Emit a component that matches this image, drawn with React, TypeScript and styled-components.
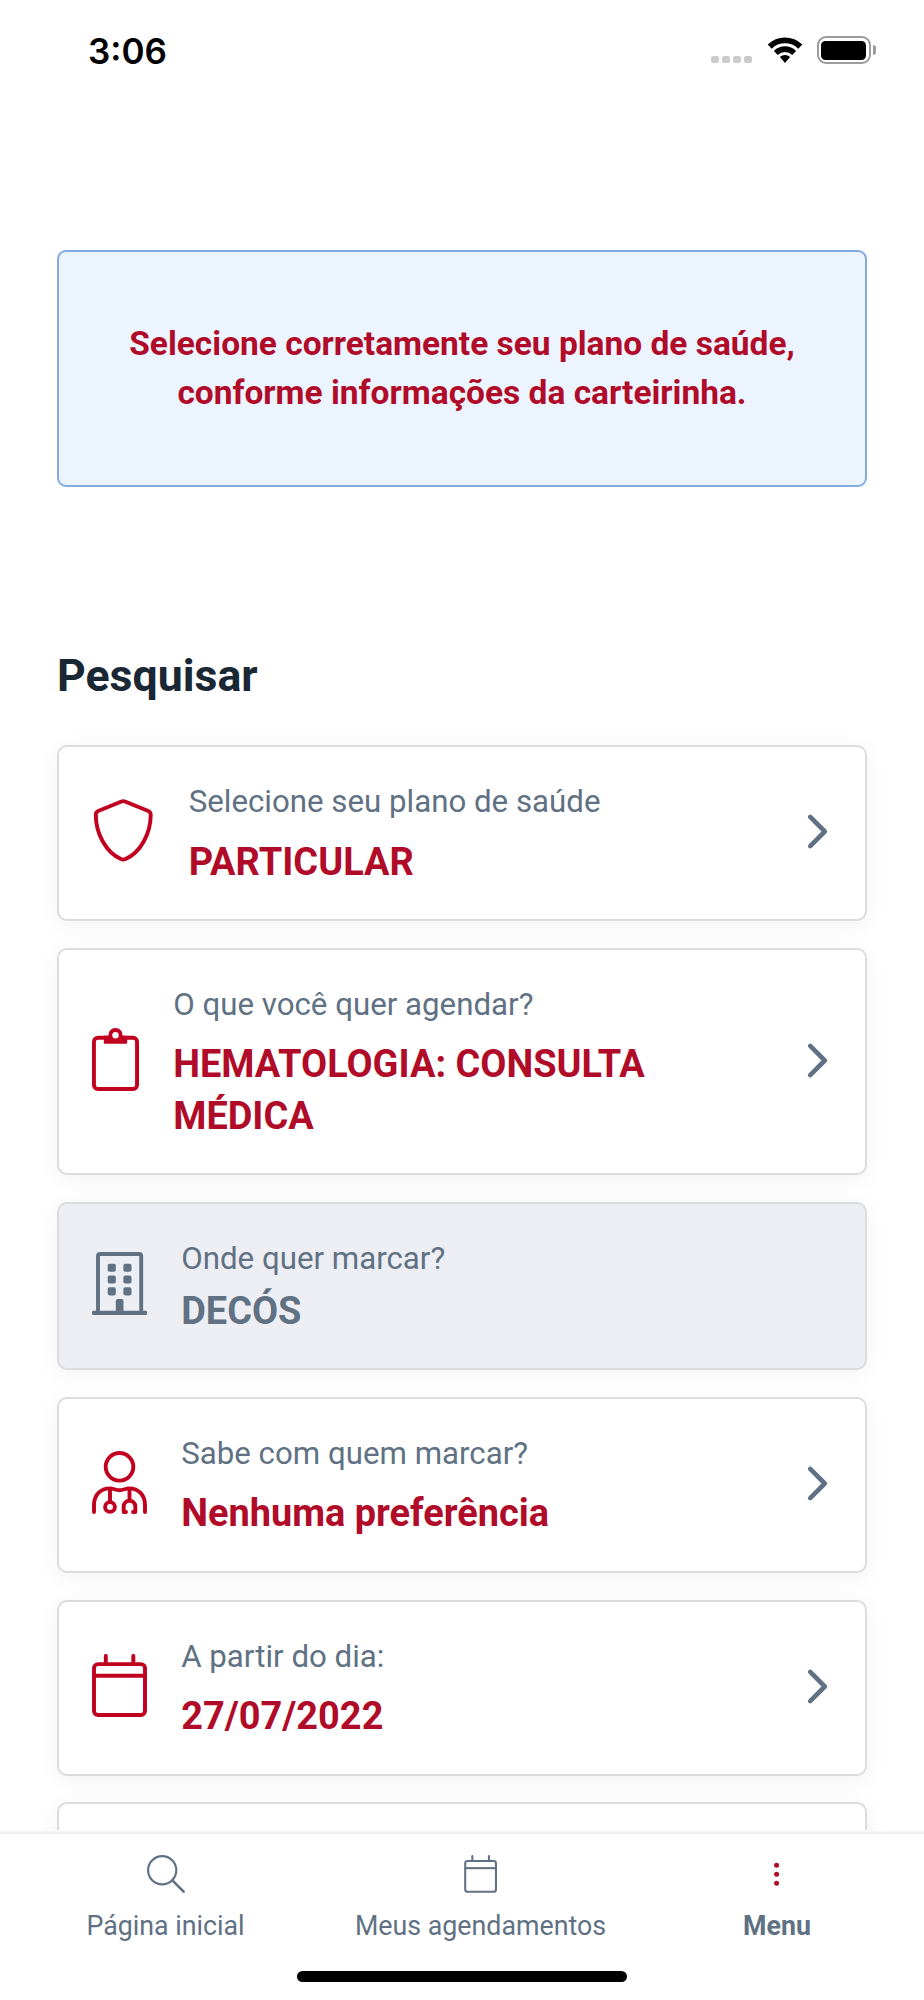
import React from 'react';
import styled, { createGlobalStyle } from 'styled-components';

const red = '#b00b28';
const iconRed = '#c1001f';
const slate = '#607183';

const GlobalStyle = createGlobalStyle`
  * { box-sizing: border-box; }
  body { margin: 0; background: #fff; }
  svg { display: block; flex: none; }
`;

const Screen = styled.div`
  display: flex;
  flex-direction: column;
  width: 924px;
  height: 2000px;
  overflow: hidden;
  background: #fff;
  font-family: Roboto, 'Liberation Sans', sans-serif;
`;

const StatusBar = styled.header`
  display: flex;
  justify-content: space-between;
  align-items: flex-start;
  height: 100px;
  flex: none;
  padding: 30px 48px 0 88px;
`;

const Time = styled.span`
  font-family: Inter, sans-serif;
  font-weight: 600;
  font-size: 35px;
  line-height: 42px;
  color: #000;
`;

const StatusIcons = styled.div`
  display: flex;
  align-items: flex-end;
  height: 28px;
  margin-top: 6px;
`;

const SignalDots = styled.div`
  display: flex;
  gap: 3.3px;
  margin: 0 15px 0.7px 0;
`;

const SignalDot = styled.i`
  width: 7.7px;
  height: 7.5px;
  border-radius: 2.2px;
  background: #cbcbcb;
`;

const Battery = styled.div`
  width: 54px;
  height: 28px;
  margin-left: 14px;
  padding: 2.5px;
  border: 2px solid #9b9b9b;
  border-radius: 9px;
`;

const Charge = styled.div`
  height: 100%;
  border-radius: 4.5px;
  background: #000;
`;

const Nub = styled.div`
  width: 3.3px;
  height: 9.6px;
  margin: 0 0 9px 2px;
  border-radius: 0 4px 4px 0;
  background: #9b9b9b;
`;

const Content = styled.main`
  display: flex;
  flex-direction: column;
  height: 1730px;
  flex: none;
  overflow: hidden;
  padding: 150px 57px 0;
`;

const Notice = styled.section`
  display: flex;
  align-items: center;
  justify-content: center;
  height: 237px;
  flex: none;
  padding-bottom: 2px;
  border: 2px solid #82abe1;
  border-radius: 9px;
  background: #ecf4ff;
  color: ${red};
  font-weight: 700;
  font-size: 33.48px;
  line-height: 49px;
  text-align: center;
`;

const Heading = styled.h1`
  margin: 163px 0 43px;
  color: #1a2735;
  font-weight: 700;
  font-size: 44.64px;
  line-height: 52px;
`;

const CardList = styled.div`
  display: flex;
  flex-direction: column;
  gap: 26.8px;
`;

const Card = styled.button<{ $disabled?: boolean }>`
  display: flex;
  align-items: center;
  gap: 34.2px;
  flex: none;
  width: 100%;
  margin: 0;
  padding: 32px 33px;
  border: 2px solid #dcdcdc;
  border-radius: 10px;
  background: ${p => (p.$disabled ? '#edeef3' : '#fff')};
  box-shadow: 0 4px 22px rgba(0, 0, 0, 0.055);
  font-family: inherit;
  text-align: left;
`;

const IconSlot = styled.span`
  flex: none;
  margin-bottom: 4.5px;
`;

const CardText = styled.span<{ $tight?: boolean }>`
  display: flex;
  flex-direction: column;
  flex: 1;
  gap: ${p => (p.$tight ? 4 : 12)}px;
  padding-top: 1px;
  margin-bottom: -1px;
`;

const Label = styled.span`
  color: ${slate};
  font-size: 31.25px;
  line-height: 44.5px;
`;

const Value = styled.span<{ $muted?: boolean }>`
  max-width: 520px;
  color: ${p => (p.$muted ? slate : red)};
  font-weight: 700;
  font-size: 37.94px;
  line-height: 51.5px;
`;

const ChevronSlot = styled.span`
  flex: none;
  margin-bottom: 3px;
`;

const NavShadow = styled.div`
  height: 4px;
  flex: none;
  background: linear-gradient(to bottom, #fdfdfd, #ebebeb);
`;

const NavBar = styled.nav`
  display: flex;
  flex-direction: column;
  align-items: center;
  justify-content: space-between;
  flex: 1;
  padding: 21px 0 18px;
  background: #fff;
`;

const Tabs = styled.div`
  display: grid;
  grid-template-columns: 331fr 299fr 294fr;
  width: 100%;
`;

const Tab = styled.a<{ $active?: boolean }>`
  display: flex;
  flex-direction: column;
  align-items: center;
  gap: 16.5px;
  color: ${slate};
  font-weight: ${p => (p.$active ? 700 : 400)};
  font-size: 26.78px;
  line-height: 32px;
`;

const HomeIndicator = styled.div`
  width: 330px;
  height: 11px;
  border-radius: 6px;
  background: #000;
`;

const WifiIcon = () => (
  <svg width="36" height="28" viewBox="0 0 36 28">
    <path d="M0.7 8.6 A24.6 24.6 0 0 1 35.3 8.6 L31.3 12.7 A18.8 18.8 0 0 0 4.7 12.7 Z" />
    <path d="M6.9 14.9 A15.8 15.8 0 0 1 29.1 14.9 L25.2 18.9 A10.2 10.2 0 0 0 10.8 18.9 Z" />
    <path d="M12.9 21.1 A7.4 7.4 0 0 1 23.1 21.1 L18 27 Z" strokeLinejoin="round" />
  </svg>
);

const ShieldIcon = () => (
  <svg width="62.5" height="63" viewBox="0 0 62.5 63" fill="none" stroke={iconRed} strokeWidth="3.9" strokeLinejoin="round">
    <path d="M29.5 2.5 Q31.25 1.7 33 2.5 L56.3 12 Q58.7 13.1 58.7 16 C58.7 34.5 48.5 53.5 33.6 60 Q31.25 61 28.9 60 C14 53.5 3.8 34.5 3.8 16 Q3.8 13.1 6.2 12 Z" />
  </svg>
);

const ClipboardIcon = () => (
  <svg width="47" height="63" viewBox="0 0 47 63" fill="none" stroke={iconRed} strokeWidth="3.9">
    <rect x="1.95" y="9.8" width="43.1" height="51.2" rx="4" />
    <path
      d="M23.5 0 A7 7 0 0 1 30.5 7.8 H35.2 V14.6 Q35.2 15.8 34 15.8 H13 Q11.8 15.8 11.8 14.6 V7.8 H16.5 A7 7 0 0 1 23.5 0 Z"
      fill={iconRed}
      stroke="none"
    />
    <circle cx="23.5" cy="7.2" r="3.2" fill="#fff" stroke="none" />
  </svg>
);

const BuildingIcon = () => (
  <svg width="55" height="63" viewBox="0 0 55 63" fill={slate}>
    <path d="M6 60 V4.2 Q6 2 8.2 2 H47 Q49.2 2 49.2 4.2 V60" fill="none" stroke={slate} strokeWidth="3.9" />
    <rect x="0" y="58.8" width="55" height="4.2" rx="1.2" />
    {[11.7, 23.5, 35.3].map(y => (
      <React.Fragment key={y}>
        <rect x="15.7" y={y} width="8.1" height="8.1" rx="1.8" />
        <rect x="31.4" y={y} width="8.1" height="8.1" rx="1.8" />
      </React.Fragment>
    ))}
    <path d="M23.8 60 V49 Q23.8 47 25.8 47 H29.5 Q31.5 47 31.5 49 V60 Z" />
  </svg>
);

const DoctorIcon = () => (
  <svg width="55" height="63" viewBox="0 0 55 63" fill="none" stroke={iconRed} strokeWidth="3.9" strokeLinecap="round" strokeLinejoin="round">
    <circle cx="27.5" cy="15.8" r="13.8" />
    <path d="M2 61 V54 C2 44 8.5 37.4 18 37.4 C21.5 37.4 23.5 39.2 27.5 39.2 C31.5 39.2 33.5 37.4 37 37.4 C46.5 37.4 53 44 53 54 V61" />
    <path d="M18 38 V50" />
    <circle cx="18" cy="56" r="4.9" />
    <path d="M37.5 38 V49.5 M34 61 H31.7 V55.5 A5.8 5.8 0 0 1 43.3 55.5 V61 H41" />
  </svg>
);

const CalendarIcon = ({ size, color, weight }: { size: number; color: string; weight: number }) => (
  <svg width={(size * 55) / 63} height={size} viewBox="0 0 55 63" fill="none" stroke={color} strokeWidth={weight}>
    <rect x="2" y="10.1" width="51" height="50.9" rx="4" />
    <path d="M2 21.8 H53" />
    <path d="M13.8 9 V1.9 M41.3 9 V1.9" strokeLinecap="round" />
  </svg>
);

const Chevron = () => (
  <svg width="26" height="37" viewBox="0 0 26 37" fill="none" stroke={slate} strokeWidth="4.6" strokeLinecap="round" strokeLinejoin="round">
    <path d="M4.2 3.9 L18.8 18.5 L4.2 33.1" />
  </svg>
);

const SearchIcon = () => (
  <svg width="38" height="38" viewBox="0 0 38 38" fill="none" stroke={slate} strokeWidth="2.2" strokeLinecap="round">
    <circle cx="15.2" cy="15.2" r="14.1" />
    <path d="M25.4 25.4 L36.6 36.6" strokeWidth="2.6" />
  </svg>
);

const MoreIcon = () => (
  <svg width="38" height="38" viewBox="0 0 38 38" fill={red}>
    <circle cx="18.6" cy="10.2" r="2.5" />
    <circle cx="18.6" cy="19.2" r="2.5" />
    <circle cx="18.6" cy="28.2" r="2.5" />
  </svg>
);

type Field = {
  icon: React.ReactNode;
  label: string;
  value: string;
  disabled?: boolean;
};

const fields: Field[] = [
  { icon: <ShieldIcon />, label: 'Selecione seu plano de saúde', value: 'PARTICULAR' },
  { icon: <ClipboardIcon />, label: 'O que você quer agendar?', value: 'HEMATOLOGIA: CONSULTA MÉDICA' },
  { icon: <BuildingIcon />, label: 'Onde quer marcar?', value: 'DECÓS', disabled: true },
  { icon: <DoctorIcon />, label: 'Sabe com quem marcar?', value: 'Nenhuma preferência' },
  { icon: <CalendarIcon size={63} color={iconRed} weight={3.9} />, label: 'A partir do dia:', value: '27/07/2022' },
];

const NextCard = styled(Card)`
  height: 176px;
`;

export default function App() {
  return (
    <Screen>
      <GlobalStyle />
      <StatusBar>
        <Time>3:06</Time>
        <StatusIcons>
          <SignalDots>
            <SignalDot />
            <SignalDot />
            <SignalDot />
            <SignalDot />
          </SignalDots>
          <WifiIcon />
          <Battery>
            <Charge />
          </Battery>
          <Nub />
        </StatusIcons>
      </StatusBar>

      <Content>
        <Notice>
          <span>
            Selecione corretamente seu plano de saúde,
            <br />
            conforme informações da carteirinha.
          </span>
        </Notice>
        <Heading>Pesquisar</Heading>
        <CardList>
          {fields.map(field => (
            <Card key={field.label} $disabled={field.disabled}>
              <IconSlot>{field.icon}</IconSlot>
              <CardText $tight={field.disabled}>
                <Label>{field.label}</Label>
                <Value $muted={field.disabled}>{field.value}</Value>
              </CardText>
              {!field.disabled && (
                <ChevronSlot>
                  <Chevron />
                </ChevronSlot>
              )}
            </Card>
          ))}
          <NextCard />
        </CardList>
      </Content>

      <NavShadow />
      <NavBar>
        <Tabs>
          <Tab>
            <SearchIcon />
            Página inicial
          </Tab>
          <Tab>
            <CalendarIcon size={38} color={slate} weight={3.4} />
            Meus agendamentos
          </Tab>
          <Tab $active>
            <MoreIcon />
            Menu
          </Tab>
        </Tabs>
        <HomeIndicator />
      </NavBar>
    </Screen>
  );
}
